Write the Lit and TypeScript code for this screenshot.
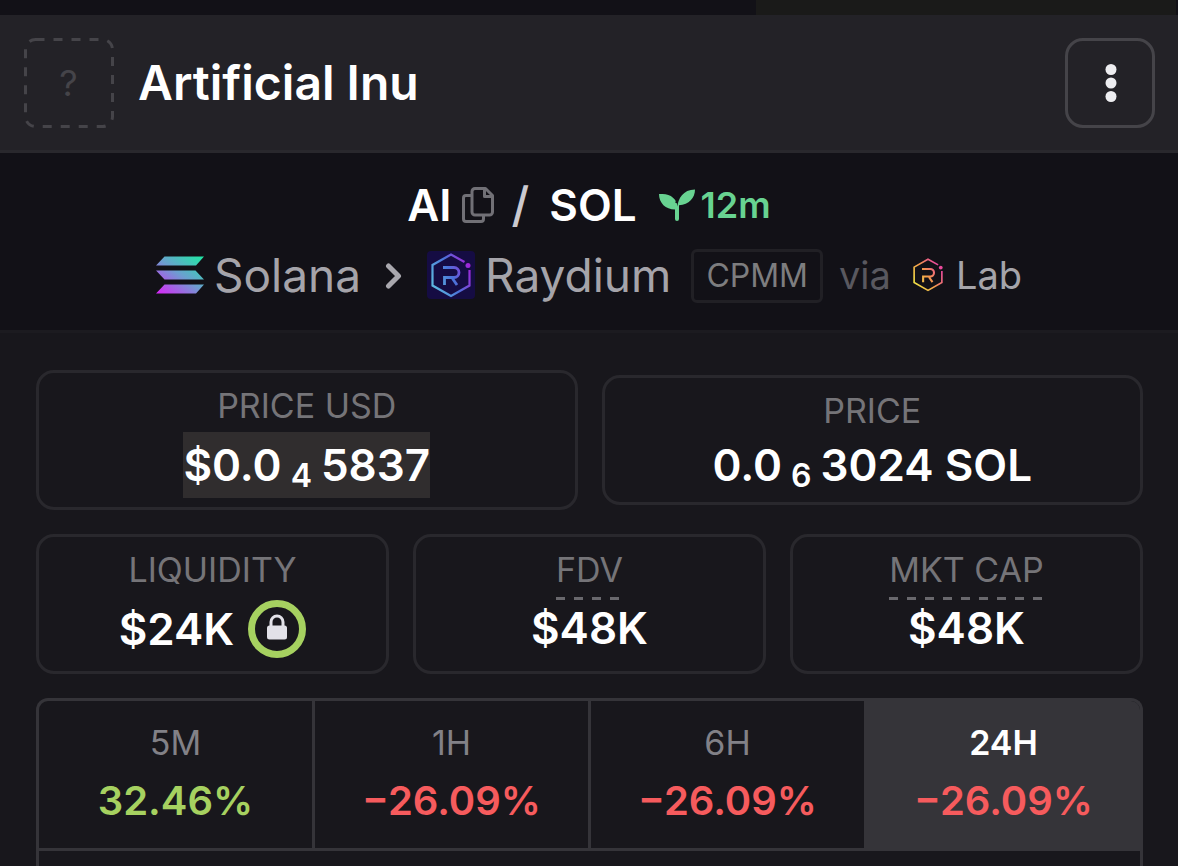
import { LitElement, html, css, svg } from "lit";
import { customElement, state } from "lit/decorators.js";
import { classMap } from "lit/directives/class-map.js";

interface Period {
  label: string;
  change: string;
  up: boolean;
}

const PERIODS: Period[] = [
  { label: "5M", change: "32.46%", up: true },
  { label: "1H", change: "−26.09%", up: false },
  { label: "6H", change: "−26.09%", up: false },
  { label: "24H", change: "−26.09%", up: false },
];

const raydiumMark = (id: string) => svg`
  <g fill="none" stroke="url(#${id})" stroke-width="2.200">
    <path d="M37.500 11 L24 3.500 L5.500 14 V34.500 L24 45 L42.500 34.500 V19" />
    <path stroke-width="2.800" d="M16 16.500 H27 a5 5 0 0 1 0 10 H17.500 V34 M25.500 27.500 L30 34" />
  </g>
  <circle cx="41" cy="14.500" r="2.500" fill="url(#${id})" />`;

@customElement("app-root")
export class AppRoot extends LitElement {
  @state() private selected = "24H";

  static styles = css`
    :host {
      display: flex;
      flex-direction: column;
      min-height: 100vh;
      background: #18171c;
      color: #fff;
      font-family: Inter, "Noto Sans", sans-serif;
    }
    * {
      box-sizing: border-box;
    }
    button {
      margin: 0;
      padding: 0;
      border: 0;
      background: none;
      color: inherit;
      font: inherit;
      cursor: pointer;
    }
    a {
      color: inherit;
      text-decoration: none;
    }
    svg {
      display: block;
      flex: none;
    }
    h1,
    h2 {
      margin: 0;
      font-weight: 600;
    }
    .strip {
      display: flex;
      justify-content: flex-end;
      height: 15px;
      padding-right: 2px;
      background: #121117;
    }
    .strip-tab {
      width: 420px;
      background: #1a1a19;
    }
    .header {
      display: flex;
      align-items: center;
      gap: 24px;
      padding: 22px 23px;
      background: #232227;
      border-bottom: 3px solid #29282d;
    }
    .logo {
      display: grid;
      place-items: center;
      width: 91px;
      height: 91px;
      color: #454449;
      font-size: 36px;
      font-weight: 400;
    }
    .logo > * {
      grid-area: 1 / 1;
    }
    .title {
      flex: 1;
      font-size: 48px;
      line-height: 60px;
    }
    .menu {
      display: grid;
      place-items: center;
      width: 90px;
      height: 90px;
      border: 3px solid #454449;
      border-radius: 18px;
    }
    .pair {
      display: flex;
      flex-direction: column;
      align-items: center;
      gap: 14px;
      padding: 22px 24px 27px;
      background: #121117;
      border-bottom: 3px solid #1c1b20;
    }
    .symbols {
      display: flex;
      align-items: center;
      font-size: 44px;
      line-height: 60px;
    }
    .copy {
      margin-left: 10px;
    }
    .slash {
      margin: 0 20px 0 18px;
      color: #cbcad0;
      font-size: 48px;
      font-weight: 500;
    }
    .age {
      display: flex;
      align-items: center;
      gap: 6px;
      margin-left: 22px;
      color: #68d391;
      font-size: 36px;
      font-weight: 600;
    }
    .venue {
      display: flex;
      align-items: flex-start;
      color: #a5a4aa;
      font-size: 46px;
      line-height: 52px;
    }
    .venue a {
      display: flex;
      align-items: center;
      gap: 10px;
    }
    .chevron {
      margin: 14px 24px 0;
    }
    .kind {
      height: 54px;
      margin: 0 16px 0 20px;
      padding: 0 12px;
      border: 3px solid #212025;
      border-radius: 6px;
      color: #7d7d7f;
      font-size: 32px;
      line-height: 48px;
    }
    .via {
      margin-right: 22px;
      color: #59585f;
      font-size: 38px;
    }
    .venue .lab {
      gap: 13px;
      font-size: 38px;
    }
    .stats {
      display: flex;
      flex: 1;
      flex-direction: column;
      gap: 24px;
      padding: 37px 35px 0 36px;
    }
    .row {
      display: grid;
      gap: 24px;
    }
    .prices {
      grid-template-columns: 1fr 1fr;
      align-items: center;
    }
    .caps {
      grid-template-columns: 1fr 1fr 1fr;
    }
    .card {
      display: flex;
      flex-direction: column;
      align-items: center;
      padding: 9px;
      border: 3px solid #29282d;
      border-radius: 18px;
    }
    .label {
      margin-bottom: 2px;
      color: #757478;
      font-size: 34px;
      font-weight: 400;
      line-height: 48px;
    }
    .tip {
      margin-bottom: 0;
      padding-bottom: 6px;
      background: repeating-linear-gradient(90deg, #69686d 0 9px, transparent 9px 18px)
        bottom / 100% 3px no-repeat;
    }
    .value {
      display: flex;
      align-items: center;
      font-size: 44px;
      font-weight: 600;
      line-height: 56px;
    }
    .tall {
      line-height: 66px;
    }
    .marked {
      background: #302d2e;
    }
    .sub {
      margin: 0 9px;
      padding-top: 22px;
      font-size: 32px;
      line-height: 34px;
    }
    .lock {
      margin-left: 14px;
    }
    .panel {
      flex: 1;
      min-height: 168px;
      border: 3px solid #353439;
      border-bottom: 0;
      border-radius: 12px 12px 0 0;
      overflow: hidden;
    }
    .periods {
      display: grid;
      grid-template-columns: repeat(4, 1fr);
      margin-right: -3px;
    }
    .period {
      display: flex;
      flex-direction: column;
      align-items: center;
      gap: 4px;
      padding: 18px 0 17px;
      border-right: 3px solid #353439;
      border-bottom: 3px solid #353439;
    }
    .selected {
      background: #353439;
    }
    .name {
      color: #828187;
      font-size: 34px;
      font-weight: 400;
      line-height: 48px;
    }
    .selected .name {
      color: #fff;
      font-weight: 600;
    }
    .change {
      color: #f65b5d;
      font-size: 40px;
      font-weight: 600;
      line-height: 60px;
    }
    .up {
      color: #a6d160;
    }
  `;

  private get header() {
    return html`
      <header class="header">
        <div class="logo">
          <svg width="91" height="91" viewBox="0 0 91 91" aria-hidden="true">
            <rect x="2.500" y="2.500" width="87" height="87" rx="10" fill="none"
              stroke="#454449" stroke-width="3" stroke-dasharray="9 9" />
          </svg>
          <span>?</span>
        </div>
        <h1 class="title">Artificial Inu</h1>
        <button class="menu" aria-label="More options">
          <svg width="14" height="38" viewBox="0 0 14 38" fill="#ededf0">
            <circle cx="8" cy="5.500" r="5.500" />
            <circle cx="8" cy="19" r="5.500" />
            <circle cx="8" cy="32.500" r="5.500" />
          </svg>
        </button>
      </header>
    `;
  }

  private get pair() {
    return html`
      <section class="pair">
        <h2 class="symbols">
          <span>AI</span>
          <button class="copy" aria-label="Copy token address">
            <svg width="32" height="36" viewBox="0 0 32 36" fill="none" stroke="#717076"
              stroke-width="3" stroke-linejoin="round">
              <path d="M9.500 8.500 H4 a2.500 2.500 0 0 0 -2.500 2.500 V32 a2.500 2.500 0 0 0 2.500 2.500 H19 a2.500 2.500 0 0 0 2.500 -2.500 V28" />
              <path d="M13 1.500 H23.500 L30.500 8.500 V25 a3 3 0 0 1 -3 3 H13 a3 3 0 0 1 -3 -3 V4.500 a3 3 0 0 1 3 -3 Z" />
              <path d="M22.500 2 V9.500 H30" />
            </svg>
          </button>
          <span class="slash">/</span>
          <span>SOL</span>
          <span class="age">
            <svg width="36" height="32" viewBox="0 0 36 32" fill="#68d391" aria-hidden="true">
              <path d="M0 5 H3.500 C12 5 18 10.500 18.500 17.500 C19 10 24 0.500 36 0.500 C36 9 30 15.500 20 16.200 V30 a2 2 0 0 1 -4 0 V20.500 C6.500 20.500 0 14 0 5 Z" />
              <path d="M17.200 14 C18 10.500 18.800 9 20.300 7.200" fill="none" stroke="#121117" stroke-width="2" />
            </svg>
            12m
          </span>
        </h2>
        <div class="venue">
          <a href="#solana">
            <svg width="48" height="38" viewBox="0 0 48 38" aria-hidden="true">
              <defs>
                <linearGradient id="sol" gradientUnits="userSpaceOnUse" x1="42" y1="-3" x2="10" y2="42">
                  <stop offset="0" stop-color="#1fe8a4" />
                  <stop offset="0.500" stop-color="#6c9fd0" />
                  <stop offset="1" stop-color="#d32cf5" />
                </linearGradient>
              </defs>
              <path fill="url(#sol)" d="M8.500 0.500 H48 L40 9.500 H0 Z M0 14.500 H39.500 L48 23.500 H8.500 Z M8.500 28.500 H48 L40 37.500 H0 Z" />
            </svg>
            Solana
          </a>
          <svg class="chevron" width="18" height="26" viewBox="0 0 18 26" fill="none" stroke="#a9a8ae"
            stroke-width="5" stroke-linecap="round" stroke-linejoin="round" aria-hidden="true">
            <path d="M3.500 3 L13.500 13 L3.500 23" />
          </svg>
          <a href="#raydium">
            <svg width="48" height="48" viewBox="0 0 48 48" aria-hidden="true">
              <defs>
                <linearGradient id="ray" gradientUnits="userSpaceOnUse" x1="6" y1="32" x2="43" y2="16">
                  <stop offset="0" stop-color="#5cb5e0" />
                  <stop offset="0.500" stop-color="#4a72d8" />
                  <stop offset="1" stop-color="#a224d8" />
                </linearGradient>
              </defs>
              <rect width="48" height="48" rx="4" fill="#150c43" />
              ${raydiumMark("ray")}
            </svg>
            Raydium
          </a>
          <span class="kind">CPMM</span>
          <span class="via">via</span>
          <a class="lab" href="#lab">
            <svg width="30" height="34" viewBox="4 2 40 45" aria-hidden="true">
              <defs>
                <linearGradient id="lab" gradientUnits="userSpaceOnUse" x1="8" y1="38" x2="40" y2="16">
                  <stop offset="0" stop-color="#efdf45" />
                  <stop offset="0.500" stop-color="#f49a4c" />
                  <stop offset="1" stop-color="#ea4a9c" />
                </linearGradient>
              </defs>
              ${raydiumMark("lab")}
            </svg>
            Lab
          </a>
        </div>
      </section>
    `;
  }

  render() {
    return html`
      <div class="strip"><div class="strip-tab"></div></div>
      ${this.header} ${this.pair}
      <main class="stats">
        <div class="row prices">
          <div class="card">
            <span class="label">PRICE USD</span>
            <span class="value tall marked">$0.0<span class="sub">4</span>5837</span>
          </div>
          <div class="card">
            <span class="label">PRICE</span>
            <span class="value">0.0<span class="sub">6</span>3024 SOL</span>
          </div>
        </div>
        <div class="row caps">
          <div class="card">
            <span class="label">LIQUIDITY</span>
            <span class="value tall">
              $24K
              <svg class="lock" width="58" height="58" viewBox="0 0 58 58" role="img" aria-label="Locked">
                <circle cx="29" cy="29" r="25.500" fill="none" stroke="#a6d160" stroke-width="7" />
                <path d="M23 26 V22 a6 6 0 0 1 12 0 V26" fill="none" stroke="#e2e1e8" stroke-width="3" />
                <rect x="19" y="25.500" width="20" height="14" rx="2.500" fill="#e2e1e8" />
              </svg>
            </span>
          </div>
          <div class="card">
            <span class="label tip">FDV</span>
            <span class="value">$48K</span>
          </div>
          <div class="card">
            <span class="label tip">MKT CAP</span>
            <span class="value">$48K</span>
          </div>
        </div>
        <div class="panel">
          <div class="periods">
            ${PERIODS.map(
              (p) => html`
                <button
                  class=${classMap({ period: true, selected: p.label === this.selected })}
                  aria-pressed=${p.label === this.selected ? "true" : "false"}
                  @click=${() => (this.selected = p.label)}
                >
                  <span class="name">${p.label}</span>
                  <span class=${classMap({ change: true, up: p.up })}>${p.change}</span>
                </button>
              `
            )}
          </div>
        </div>
      </main>
    `;
  }
}
